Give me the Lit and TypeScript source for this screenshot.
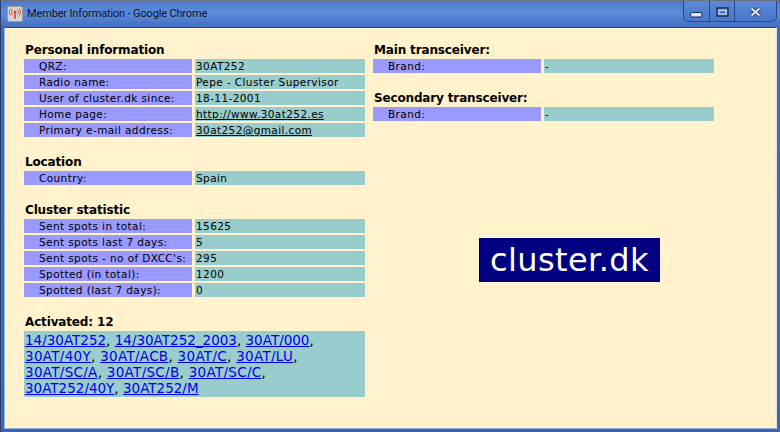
import { LitElement, html, css } from "lit";
import { customElement } from "lit/decorators.js";

type Row = [string, string, string?];
const personal: Row[] = [
  ["QRZ:", "30AT252"],
  ["Radio name:", "Pepe - Cluster Supervisor"],
  ["User of cluster.dk since:", "18-11-2001"],
  ["Home page:", "http://www.30at252.es", "l"],
  ["Primary e-mail address:", "30at252@gmail.com", "l"],
];
const stats: Row[] = [
  ["Sent spots in total:", "15625"],
  ["Sent spots last 7 days:", "5"],
  ["Sent spots - no of DXCC's:", "295"],
  ["Spotted (in total):", "1200"],
  ["Spotted (last 7 days):", "0"],
];
const activated = [
  ["14/30AT252", "14/30AT252_2003", "30AT/000"],
  ["30AT/40Y", "30AT/ACB", "30AT/C", "30AT/LU"],
  ["30AT/SC/A", "30AT/SC/B", "30AT/SC/C"],
  ["30AT252/40Y", "30AT252/M"],
];

@customElement("app-root")
export class AppRoot extends LitElement {
  static styles = css`
    :host { display: block; width: 780px; height: 432px; overflow: hidden; font-family: "DejaVu Sans", Verdana, sans-serif; }
    .win { width: 780px; height: 432px; box-sizing: border-box; display: flex; flex-direction: column;
      background: linear-gradient(#4d79c9 0, #5f8bdb 12px, #3f6cc0 27px, #3a64b4 100%); border-top: 1px solid #6b6f80; border-left: 1px solid #2c3e70; padding: 0 3px 3px 3px; }
    .title { height: 26px; flex: none; display: flex; align-items: center; gap: 4px; margin-left: 3px; color: #0c1426; }
    .ico { width: 16px; height: 16px; flex: none; display: block; }
    .title .t { flex: 1; font-family: Roboto, "DejaVu Sans", sans-serif; font-size: 11px; letter-spacing: -0.15px; padding-bottom: 1px; }
    .btns { display: flex; height: 20px; align-self: flex-start; border: 1px solid #2a4a86; border-top: none; border-radius: 0 0 5px 5px; background: linear-gradient(#5c88d8, #4a76c8); }
    .btn { width: 25px; display: flex; align-items: center; justify-content: center; border-right: 1px solid #2a4a86; }
    .btn + .btn { width: 24px; }
    .btn.x { width: 41px; border-right: none; }
    .btn svg { display: block; }
    .body { flex: 1; background: #fff2cc; border: 1px solid #9db4dc; border-top-color: #24468a; border-right-color: #e8e4d8; display: grid; grid-template-columns: 344px 393px; column-gap: 5px; padding: 0 0 0 19px; min-height: 0; }
    .col { display: flex; flex-direction: column; }
    h2 { margin: 0; font-size: 12px; line-height: 14px; height: 16px; font-weight: 700; color: #000; padding-left: 1px; letter-spacing: -0.15px; }
    .sec { margin-bottom: 18px; }
    .left, .right { padding-top: 15px; }
    .rows { display: grid; grid-template-columns: 168px 170px; column-gap: 3px; row-gap: 2px; }
    .k, .v { height: 14px; line-height: 14px; font-size: 10.5px; color: #000; white-space: nowrap; letter-spacing: 0.4px; }
    .k { background: #9999ff; padding-left: 15px; }
    .v { background: #99cccc; padding-left: 1px; }
    .v a { color: #000; text-decoration: underline; }
    .act { width: 341px; background: #99cccc; box-sizing: border-box; padding: 1px; font-size: 13.5px; line-height: 16px; color: #000; }
    .line { white-space: nowrap; letter-spacing: 0.3px; }
    .line:first-child, .line:last-child { letter-spacing: 0; }
    .act a { color: #0000ee; text-decoration: underline; }
    .logo-wrap { flex: 1; display: flex; justify-content: center; padding-top: 99px; }
    .logo { width: 181px; height: 44px; background: #000080; color: #fff; font-size: 32px; line-height: 44px; text-align: center; letter-spacing: 0.4px; }
  `;

  private rows(rows: Row[]) {
    return html`<div class="rows">${rows.map(([k, v, l]) => html`<div class="k">${k}</div><div class="v">${l ? html`<a href="#">${v}</a>` : v}</div>`)}</div>`;
  }

  render() {
    return html`<div class="win">
      <div class="title">
        <svg class="ico" viewBox="0 0 16 16">
          <rect x="0.5" y="0.5" width="15" height="15" rx="1.5" fill="#d8d2cc" stroke="#9a9a9a"/>
          <path d="M8 7V13" stroke="#d23a2a" stroke-width="1.4"/>
          <circle cx="8" cy="6" r="1.3" fill="#d23a2a"/>
          <path d="M5.5 3.5a4 4 0 0 0 0 5M10.5 3.5a4 4 0 0 1 0 5M3.5 2.5a6 6 0 0 0 0 7M12.5 2.5a6 6 0 0 1 0 7" fill="none" stroke="#d8604a" stroke-width="1"/>
        </svg>
        <span class="t">Member Information - Google Chrome</span>
        <div class="btns">
          <div class="btn"><svg width="13" height="20" viewBox="0 0 13 20"><rect x="0.5" y="11.5" width="11.5" height="4.5" rx="2" fill="#dbe6f8" stroke="#16294f"/></svg></div>
          <div class="btn"><svg width="13" height="20" viewBox="0 0 13 20"><rect x="1" y="7" width="11" height="8" fill="#7fa3e6" stroke="#16294f" stroke-width="1.4"/><rect x="3" y="9.5" width="7" height="3.5" fill="#4a76c8" stroke="#dbe6f8" stroke-width="0.8"/></svg></div>
          <div class="btn x"><svg width="13" height="20" viewBox="0 0 13 20"><path d="M2.5 7.5L10.5 14.5M10.5 7.5L2.5 14.5" stroke="#16294f" stroke-width="3.6"/><path d="M2.5 7.5L10.5 14.5M10.5 7.5L2.5 14.5" stroke="#e6eefb" stroke-width="2"/></svg></div>
        </div>
      </div>
      <div class="body">
        <div class="col left">
          <div class="sec"><h2>Personal information</h2>${this.rows(personal)}</div>
          <div class="sec"><h2>Location</h2>${this.rows([["Country:", "Spain"]])}</div>
          <div class="sec"><h2>Cluster statistic</h2>${this.rows(stats)}</div>
          <div class="sec"><h2>Activated: 12</h2>
            <div class="act">${activated.map((line, n) => html`<div class="line">${line.map((a, i) => html`<a href="#">${a}</a>${i < line.length - 1 || n < activated.length - 1 ? ", " : ""}`)}</div>`)}</div>
          </div>
        </div>
        <div class="col right">
          <div class="sec"><h2>Main transceiver:</h2>${this.rows([["Brand:", "-"]])}</div>
          <div class="sec"><h2>Secondary transceiver:</h2>${this.rows([["Brand:", "-"]])}</div>
          <div class="logo-wrap"><div class="logo">cluster.dk</div></div>
        </div>
      </div>
    </div>`;
  }
}
